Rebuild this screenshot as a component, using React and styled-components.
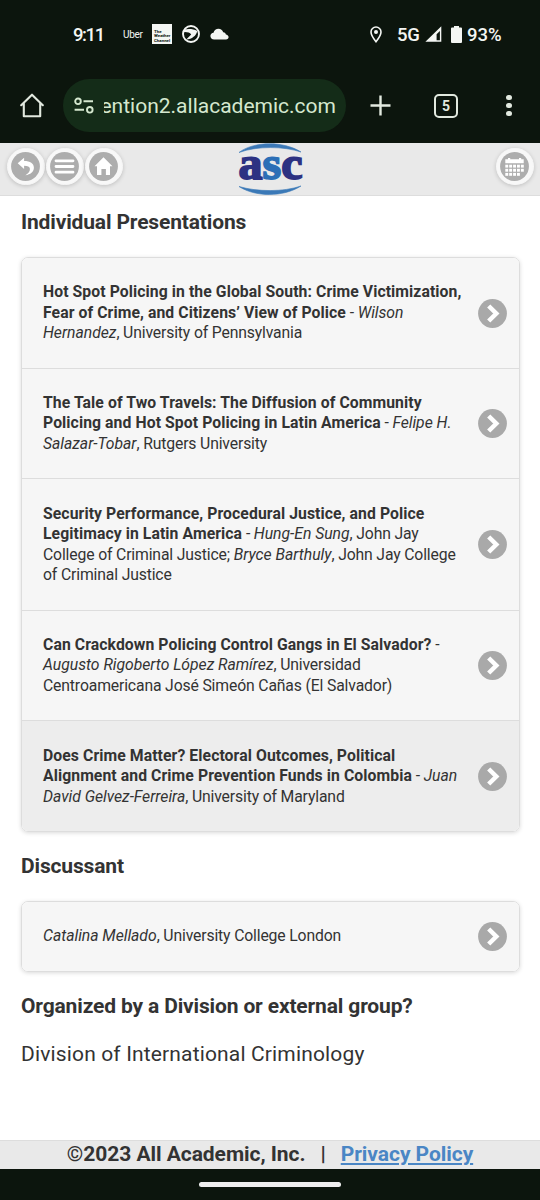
import React from "react";
import styled, { createGlobalStyle } from "styled-components";

const presentations = [
  {
    title: ["Hot Spot Policing in the Global South: Crime Victimization,", "Fear of Crime, and Citizens’ View of Police"],
    people: (
      <>
        <i>Wilson<br />Hernandez</i>, University of Pennsylvania
      </>
    )
  },
  {
    title: ["The Tale of Two Travels: The Diffusion of Community", "Policing and Hot Spot Policing in Latin America"],
    people: (
      <>
        <i>Felipe H.<br />Salazar-Tobar</i>, Rutgers University
      </>
    )
  },
  {
    title: ["Security Performance, Procedural Justice, and Police", "Legitimacy in Latin America"],
    people: (
      <>
        <i>Hung-En Sung</i>, John Jay<br />College of Criminal Justice; <i>Bryce Barthuly</i>, John Jay College<br />of Criminal Justice
      </>
    )
  },
  {
    title: ["Can Crackdown Policing Control Gangs in El Salvador?"],
    people: (
      <>
        <br />
        <i>Augusto Rigoberto López Ramírez</i>, Universidad<br />Centroamericana José Simeón Cañas (El Salvador)
      </>
    )
  },
  {
    active: true,
    title: ["Does Crime Matter? Electoral Outcomes, Political", "Alignment and Crime Prevention Funds in Colombia"],
    people: (
      <>
        <i>Juan<br />David Gelvez-Ferreira</i>, University of Maryland
      </>
    )
  }
];

const StatusIcons = () => (
  <StatusGroup>
    <UberLabel>Uber</UberLabel>
    <WeatherTile>
      <span>The</span>
      <span>Weather</span>
      <span>Channel</span>
    </WeatherTile>
    <svg width="18" height="18" viewBox="0 0 18 18">
      <circle cx="9" cy="9" r="8" fill="none" stroke="#f4f6f3" strokeWidth="1.9" />
      <path d="M2 4.6 C6 3.6 11.5 3.8 15.2 6 C14.4 10.8 10 14 4.2 14.6 L9.2 9.4 C7.8 7.6 5.3 6.8 2 7 Z" fill="#f4f6f3" />
    </svg>
    <svg width="19" height="12" viewBox="0 0 19 12">
      <path d="M4.2 11.5 C1.8 11.5 .4 10 .4 8.1 C.4 6.2 1.8 4.8 3.5 4.7 C4.2 2.2 6.1 .7 8.4 .7 C10.8 .7 12.5 2 13.2 4.2 C14.2 4.1 15.6 5 15.9 6.4 C17.4 6.6 18.6 7.7 18.6 9.1 C18.6 10.5 17.5 11.5 16 11.5 Z" fill="#f4f6f3" />
    </svg>
  </StatusGroup>
);

const Chevron = () => (
  <ChevronIcon viewBox="0 0 29 29">
    <circle cx="14.5" cy="14.5" r="14.4" fill="#a9a9a9" />
    <path d="M10.7 7 L18.3 14.5 L10.7 22" fill="none" stroke="#fff" strokeWidth="4.5" />
  </ChevronIcon>
);

const RoundButton = ({ label, children }) => (
  <StyledRoundButton aria-label={label}>
    <svg width="29" height="29" viewBox="0 0 29 29">
      <circle cx="14.5" cy="14.5" r="14.4" fill="#adadad" />
      {children}
    </svg>
  </StyledRoundButton>
);

const Logo = () => (
  <StyledLogo viewBox="0 0 68 54">
    <path d="M2 9.5 C16 -1.5 46 -2.5 64 9 C47 3.2 20 2.8 2 9.5 Z" fill="#3b79b7" stroke="#3b79b7" strokeWidth=".6" />
    <path d="M2 43.5 C20 49 47 49 64 43 C46 54.5 18 54 2 43.5 Z" fill="#3b79b7" stroke="#3b79b7" strokeWidth=".6" />
    <LogoText x="1.5" y="36" textLength="64" lengthAdjust="spacingAndGlyphs">
      <tspan fill="#2d3282" stroke="#2d3282">a</tspan>
      <tspan fill="#2c6fb6" stroke="#2c6fb6">s</tspan>
      <tspan fill="#2d3282" stroke="#2d3282">c</tspan>
    </LogoText>
  </StyledLogo>
);

const PresentationRow = ({ active, title, people }) => (
  <Row $active={active}>
    <RowText>
      <b>
        {title.map((line, i) => (
          <React.Fragment key={line}>
            {i > 0 && <br />}
            {line}
          </React.Fragment>
        ))}
      </b>{" "}
      - {people}
    </RowText>
    <Chevron />
  </Row>
);

export default function App() {
  return (
    <Screen>
      <GlobalStyle />
      <StatusBar>
        <Clock>9:11</Clock>
        <StatusIcons />
        <Spacer />
        <svg width="12" height="17" viewBox="0 0 12 17">
          <path d="M6 15.7 C3 12 1 9 1 6 A5 5 0 0 1 11 6 C11 9 9 12 6 15.7 Z" fill="none" stroke="#f4f6f3" strokeWidth="1.6" />
          <circle cx="6" cy="6" r="2" fill="#f4f6f3" />
        </svg>
        <Network>5G</Network>
        <SignalIcon width="17" height="16" viewBox="0 0 17 16">
          <path d="M16.3 .3 V15.7 H.4 Z M14.9 5 L11.6 8.2 V14.2 H14.9 Z" fill="#f4f6f3" fillRule="evenodd" />
        </SignalIcon>
        <BatteryIcon width="11" height="17" viewBox="0 0 11 17">
          <path d="M3 0 H8 V1.6 H10 Q11 1.6 11 2.6 V16 Q11 17 10 17 H1 Q0 17 0 16 V2.6 Q0 1.6 1 1.6 H3 Z" fill="#f4f6f3" />
        </BatteryIcon>
        <Percent>93%</Percent>
      </StatusBar>

      <BrowserBar>
        <svg width="24" height="25" viewBox="0 0 24 25">
          <path d="M1.2 12.2 L12 1.7 L22.8 12.2 M3.8 10.2 V23.2 H20.2 V10.2" fill="none" stroke="#e2e9df" strokeWidth="2.1" strokeLinejoin="round" strokeLinecap="round" />
        </svg>
        <AddressBar>
          <svg width="20" height="18" viewBox="0 0 20 18">
            <g fill="none" stroke="#d5e8cf" strokeWidth="1.9">
              <circle cx="4" cy="4.3" r="2.8" />
              <circle cx="15.8" cy="12.8" r="2.8" />
              <path d="M9.5 4.3 H19 M.6 12.8 H10" />
            </g>
          </svg>
          <Url><span>ention2.allacademic.com</span></Url>
        </AddressBar>
        <PlusIcon width="21" height="21" viewBox="0 0 21 21">
          <path d="M10.5 .5 V20.5 M.5 10.5 H20.5" stroke="#e2e9df" strokeWidth="2.4" />
        </PlusIcon>
        <TabCount>5</TabCount>
        <Dots>
          <span />
          <span />
          <span />
        </Dots>
      </BrowserBar>

      <SiteHeader>
        <ButtonGroup>
          <RoundButton label="Back">
            <path d="M13.1 5.7 V9.1 C19.2 9.1 22.9 11.4 22.9 15.8 C22.9 20.1 19.4 22.5 14.4 23.3 C17.4 21 19.2 19.2 18.9 16.7 C18.6 14.5 16.7 13.7 13.1 13.7 V17 L6.7 11.2 Z" fill="#fff" />
          </RoundButton>
          <RoundButton label="Menu">
            <path d="M6 8.8 H23 M6 14.5 H23 M6 20.2 H23" stroke="#fff" strokeWidth="2.8" strokeLinecap="round" />
          </RoundButton>
          <RoundButton label="Home">
            <path d="M14.5 5.2 L23.5 14.2 H21 V23 H16.9 V17 H12.4 V23 H8 V14.2 H5.5 Z" fill="#fff" />
          </RoundButton>
        </ButtonGroup>
        <Logo />
        <RoundButton label="Schedule">
          <path d="M5.3 7.2 H8 V5.9 H10.2 V7.2 H19 V5.9 H21.2 V7.2 H23.7 V11.2 H5.3 Z" fill="#fff" />
          {[12.7, 16.8, 20.9].map((y, row) =>
            [5.3, 9.2, 13.1, 17, 20.9].slice(0, row === 2 ? 4 : 5).map(x => (
              <rect key={`${x}-${y}`} x={x} y={y} width="2.9" height="2.9" fill="#fff" />
            ))
          )}
        </RoundButton>
      </SiteHeader>

      <Content>
        <Heading>Individual Presentations</Heading>
        <List>
          {presentations.map(p => (
            <PresentationRow key={p.title[0]} {...p} />
          ))}
        </List>
        <Heading>Discussant</Heading>
        <List>
          <Row>
            <RowText>
              <i>Catalina Mellado</i>, University College London
            </RowText>
            <Chevron />
          </Row>
        </List>
        <Heading>Organized by a Division or external group?</Heading>
        <Division>Division of International Criminology</Division>
      </Content>

      <Footer>
        <span>©2023 All Academic, Inc.</span>
        <span>|</span>
        <a href="#privacy">Privacy Policy</a>
      </Footer>
      <NavigationBar>
        <NavigationHandle />
      </NavigationBar>
    </Screen>
  );
}

const GlobalStyle = createGlobalStyle`
  * {
    box-sizing: border-box;
  }
  body {
    margin: 0;
    background: #fff;
  }
  svg {
    display: block;
    flex-shrink: 0;
  }
`;
const Screen = styled.div`
  display: flex;
  flex-direction: column;
  width: 540px;
  height: 1200px;
  overflow: hidden;
  font-family: Roboto, "Liberation Sans", sans-serif;
  color: #333;
  background: #fff;
`;
const StatusBar = styled.div`
  display: flex;
  align-items: center;
  height: 68px;
  flex-shrink: 0;
  padding: 0 37px 0 73px;
  background: #0c150d;
  color: #f4f6f3;
  font-family: Roboto, sans-serif;
  font-size: 18.5px;
  font-weight: 500;
`;
const Clock = styled.span`
  width: 50px;
  padding-top: 1px;
  letter-spacing: -1.4px;
`;
const StatusGroup = styled.div`
  display: flex;
  align-items: center;
  gap: 10px;
`;
const UberLabel = styled.span`
  width: 19px;
  font-size: 10px;
  font-weight: 400;
  letter-spacing: -0.3px;
`;
const WeatherTile = styled.div`
  display: flex;
  flex-direction: column;
  justify-content: flex-end;
  width: 20px;
  height: 20px;
  padding: 0 0 1px 2px;
  background: #f4f6f3;
  color: #0c150d;
  font: bold 4.4px/4.5px Roboto, sans-serif;
`;
const Spacer = styled.div`
  flex: 1;
`;
const Network = styled.span`
  width: 23px;
  margin-left: 15px;
  padding-top: 1px;
  letter-spacing: -0.2px;
`;
const SignalIcon = styled.svg`
  margin-left: 5px;
`;
const BatteryIcon = styled.svg`
  margin: 0 5px 0 9px;
`;
const Percent = styled.span`
  width: 36px;
  padding-top: 1px;
`;
const BrowserBar = styled.div`
  display: flex;
  align-items: center;
  height: 75px;
  flex-shrink: 0;
  padding: 0 28px 0 20px;
  background: #0c150d;
`;
const AddressBar = styled.div`
  display: flex;
  align-items: center;
  width: 283px;
  height: 53px;
  margin-left: 19px;
  padding: 0 10px 0 11px;
  border-radius: 27px;
  background: #142c18;
`;
const Url = styled.div`
  display: flex;
  justify-content: flex-end;
  width: 232px;
  margin-left: 10px;
  overflow: hidden;
  white-space: nowrap;
  color: #d5e8cf;
  font-size: 21px;
`;
const PlusIcon = styled.svg`
  margin-left: 24px;
`;
const TabCount = styled.div`
  display: flex;
  align-items: center;
  justify-content: center;
  width: 24px;
  height: 24px;
  margin-left: 43px;
  border: 2.4px solid #e2e9df;
  border-radius: 5px;
  color: #e2e9df;
  font: bold 14px Roboto, sans-serif;
`;
const Dots = styled.div`
  display: flex;
  flex-direction: column;
  gap: 2.4px;
  margin-left: auto;
  span {
    width: 5.6px;
    height: 5.6px;
    border-radius: 50%;
    background: #e2e9df;
  }
`;
const SiteHeader = styled.header`
  display: flex;
  align-items: flex-start;
  justify-content: space-between;
  height: 53px;
  flex-shrink: 0;
  padding: 4.5px 6.5px 0 7px;
  border-bottom: 1px solid #ddd;
  background: #e9e9e9;
`;
const ButtonGroup = styled.div`
  display: flex;
  gap: 1.5px;
  width: 231px;
`;
const StyledRoundButton = styled.button`
  display: flex;
  align-items: center;
  justify-content: center;
  width: 37.5px;
  height: 37.5px;
  padding: 0;
  border: 1px solid #f6f6f6;
  border-radius: 50%;
  background: #f8f8f8;
  box-shadow: 0 1px 4px rgba(0, 0, 0, 0.18);
`;
const StyledLogo = styled.svg`
  width: 68px;
  height: 54px;
  margin: -5px 191.5px 0 0;
  overflow: visible;
`;
const LogoText = styled.text`
  font: bold 47px "Liberation Serif", serif;
  stroke-width: 1.8px;
`;
const Content = styled.main`
  flex: 1;
  padding: 13px 20px 0 21px;
`;
const Heading = styled.h3`
  margin: 0;
  font-size: 21px;
  line-height: 27px;
  font-weight: 700;
  letter-spacing: -0.15px;
  white-space: nowrap;
`;
const List = styled.ul`
  margin: 21.1px 0 21px;
  padding: 0;
  list-style: none;
  overflow: hidden;
  border: 1px solid #ddd;
  border-radius: 7px;
  box-shadow: 0 1px 4px rgba(0, 0, 0, 0.15);
`;
const Row = styled.li`
  display: flex;
  align-items: center;
  justify-content: space-between;
  padding: 24.2px 12px 24px 21px;
  background: ${props => (props.$active ? "#ededed" : "#f6f6f6")};
  & + & {
    border-top: 1px solid #ddd;
  }
`;
const RowText = styled.div`
  font-size: 15.75px;
  line-height: 20.5px;
  letter-spacing: -0.15px;
  white-space: nowrap;
  b {
    letter-spacing: 0.08px;
  }
  i {
    letter-spacing: -0.03px;
  }
`;
const ChevronIcon = styled.svg`
  width: 29px;
  height: 29px;
  margin: -5px 0;
`;
const Division = styled.p`
  margin: 21.6px 0 0;
  font-size: 21px;
  line-height: 27px;
  letter-spacing: 0.15px;
`;
const Footer = styled.footer`
  display: flex;
  justify-content: center;
  gap: 15px;
  height: 29px;
  flex-shrink: 0;
  border-top: 1px solid #ddd;
  background: #e9e9e9;
  font-size: 21px;
  line-height: 27px;
  font-weight: 700;
  letter-spacing: -0.05px;
  a {
    color: #4a86c5;
  }
`;
const NavigationBar = styled.div`
  display: flex;
  align-items: center;
  justify-content: center;
  height: 31px;
  flex-shrink: 0;
  background: #0c150d;
`;
const NavigationHandle = styled.div`
  width: 142px;
  height: 5px;
  border-radius: 3px;
  background: #eee;
`;
